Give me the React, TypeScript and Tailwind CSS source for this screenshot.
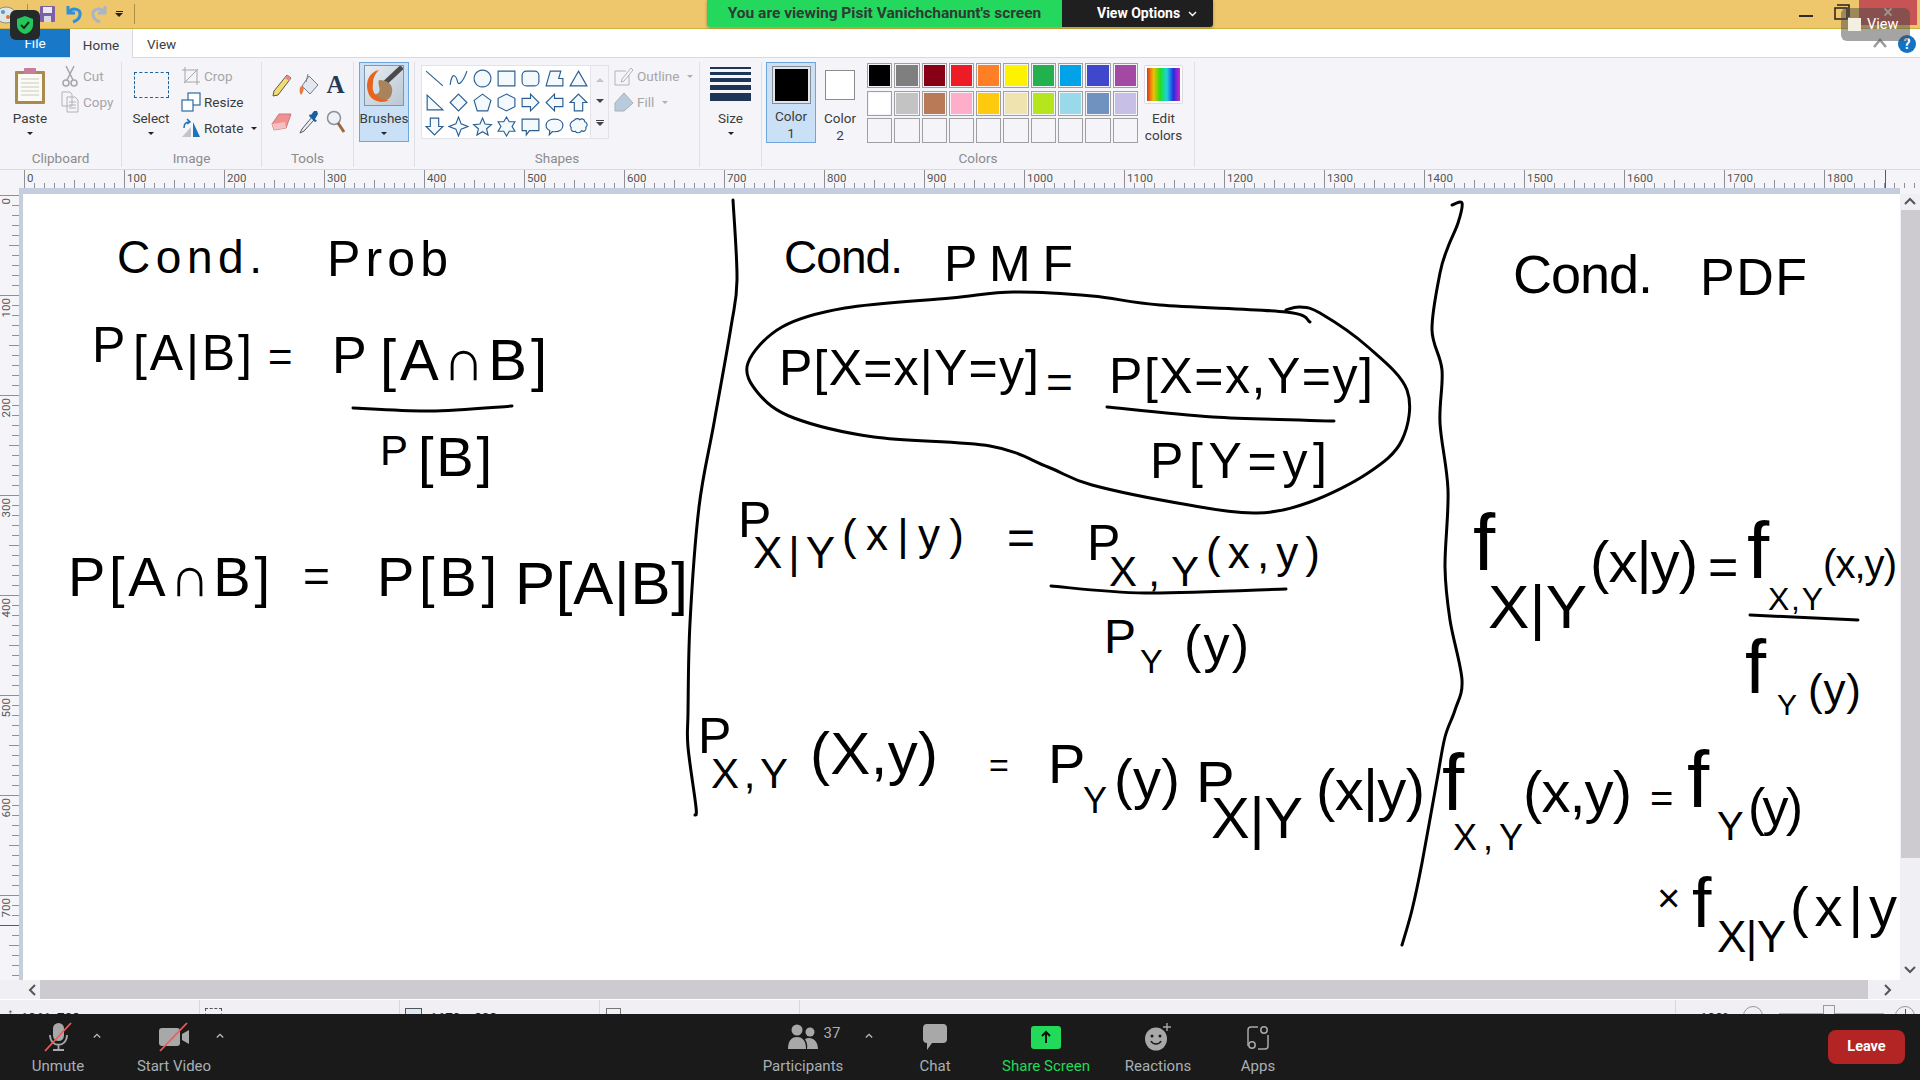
import type { ReactNode } from "react";

const rulerMarks = Array.from({ length: 190 }, (_, i) => i * 10);
const sideMarks = Array.from({ length: 80 }, (_, i) => i * 10);

const row1 = ["#000000", "#7f7f7f", "#880015", "#ed1c24", "#ff7f27", "#fff200", "#22b14c", "#00a2e8", "#3f48cc", "#a349a4"];
const row2 = ["#ffffff", "#c3c3c3", "#b97a57", "#ffaec9", "#ffc90e", "#efe4b0", "#b5e61d", "#99d9ea", "#7092be", "#c8bfe7"];

const shapes = [
  "M2 3L18 17",
  "M2 16C4 2 8 8 9 13S15 12 18 3",
  "M10 2a8 8 0 1 0 .01 0Z",
  "M2 3H18V17H2Z",
  "M6 3H14a4 4 0 0 1 4 4V13a4 4 0 0 1-4 4H6a4 4 0 0 1-4-4V7a4 4 0 0 1 4-4Z",
  "M6 3H16L14 10H18V17H2Z",
  "M10 3L18 17H2Z",
  "M3 3L18 17H3Z",
  "M10 2L18 10L10 18L2 10Z",
  "M10 2L18 8L15 18H5L2 8Z",
  "M10 2L18 6V14L10 18L2 14V6Z",
  "M2 6H10V2L18 10L10 18V14H2Z",
  "M18 6H10V2L2 10L10 18V14H18Z",
  "M10 2L18 10H14V18H6V10H2Z",
  "M10 18L18 10H14V2H6V10H2Z",
  "M10 1L12.5 7.5L19 10L12.5 12.5L10 19L7.5 12.5L1 10L7.5 7.5Z",
  "M10 2L12.4 7.6L18.5 8.2L13.9 12.2L15.3 18.2L10 15L4.7 18.2L6.1 12.2L1.5 8.2L7.6 7.6Z",
  "M10 1L12.6 5.5H18L15.3 10L18 14.5H12.6L10 19L7.4 14.5H2L4.7 10L2 5.5H7.4Z",
  "M2 3H18V14H9L6 18V14H2Z",
  "M10 3C15 3 18 5.5 18 9S15 15 10 15C9 15 8.500 15 8 14.800L5 18L5.500 13.800C3.300 12.800 2 11 2 9C2 5.500 5 3 10 3Z",
  "M6 4C7 2 10 2 11 3.500C13 2 16 3 16 5.500C18.500 6 19 9.500 17 11C18 13.500 15 15.500 13 14C11.500 16.500 8 16.500 7 14.500C4.500 15.500 2 13.500 3 11C1 9.500 2 5.500 6 4Z",
];

// handwriting on the paint canvas: text, left, right, baseline, size
const ink: [string, number, number, number, number][] = [
  ["Cond.", 117, 262, 273, 46],
  ["Prob", 327, 448, 276, 50],
  ["P", 92, 113, 362, 50],
  ["[A|B]", 133, 252, 370, 50],
  ["=", 268, 292, 371, 42],
  ["P", 332, 364, 373, 52],
  ["[A∩B]", 380, 547, 380, 58],
  ["P", 380, 406, 465, 42],
  ["[B]", 418, 492, 476, 56],
  ["P[A∩B]", 68, 270, 596, 56],
  ["=", 303, 331, 592, 46],
  ["P[B]", 377, 497, 596, 56],
  ["P[A|B]", 515, 688, 604, 60],
  ["Cond.", 784, 903, 273, 46],
  ["PMF", 944, 1073, 281, 50],
  ["P[X=x|Y=y]", 779, 1039, 385, 50],
  ["=", 1046, 1073, 398, 46],
  ["P[X=x,Y=y]", 1109, 1373, 393, 50],
  ["P[Y=y]", 1150, 1327, 478, 50],
  ["P", 738, 772, 537, 50],
  ["X|Y", 753, 835, 568, 44],
  ["(x|y)", 842, 964, 550, 44],
  ["=", 1007, 1036, 554, 48],
  ["P", 1087, 1121, 560, 50],
  ["X,Y", 1109, 1199, 586, 42],
  ["(x,y)", 1206, 1320, 568, 44],
  ["P", 1104, 1138, 653, 48],
  ["Y", 1140, 1165, 673, 34],
  ["(y)", 1184, 1249, 662, 52],
  ["P", 698, 730, 753, 50],
  ["X,Y", 711, 788, 788, 42],
  ["(X,y)", 810, 938, 774, 60],
  ["=", 989, 1009, 777, 34],
  ["P", 1048, 1089, 783, 56],
  ["Y", 1083, 1106, 813, 36],
  ["(y)", 1114, 1180, 798, 56],
  ["P", 1196, 1232, 802, 58],
  ["X|Y", 1211, 1303, 838, 58],
  ["(x|y)", 1316, 1425, 810, 58],
  ["Cond.", 1513, 1653, 293, 54],
  ["PDF", 1700, 1807, 295, 52],
  ["f", 1473, 1522, 570, 80],
  ["X|Y", 1488, 1587, 628, 62],
  ["(x|y)", 1590, 1698, 582, 58],
  ["=", 1708, 1740, 585, 52],
  ["f", 1747, 1783, 578, 80],
  ["X,Y", 1768, 1823, 610, 32],
  ["(x,y)", 1823, 1897, 578, 40],
  ["f", 1745, 1787, 693, 76],
  ["Y", 1777, 1800, 715, 30],
  ["(y)", 1808, 1861, 705, 44],
  ["f", 1442, 1480, 810, 80],
  ["X,Y", 1453, 1523, 850, 36],
  ["(x,y)", 1523, 1632, 812, 58],
  ["=", 1650, 1673, 812, 40],
  ["f", 1687, 1725, 807, 80],
  ["Y", 1717, 1747, 840, 40],
  ["(y)", 1748, 1803, 825, 52],
  ["×", 1657, 1683, 912, 40],
  ["f", 1692, 1730, 927, 70],
  ["X|Y", 1717, 1786, 952, 44],
  ["(x|y", 1790, 1897, 926, 56],
];

// pen strokes that are not letters: the column dividers, the loop, fraction bars
const inkStrokes: [number, number][][] = [
  [[733, 200], [737, 280], [731, 327], [714, 423], [699, 507], [690, 623], [688, 713], [688, 747], [696, 807], [695, 815]],
  [[1452, 205], [1462, 203], [1458, 223], [1448, 247], [1440, 273], [1432, 330], [1442, 370], [1440, 423], [1448, 490], [1445, 567], [1450, 620], [1462, 680], [1455, 710], [1445, 737], [1437, 780], [1422, 863], [1412, 910], [1402, 945]],
  [[1310, 322], [1286, 312], [1160, 305], [1092, 296], [1014, 292], [951, 298], [845, 308], [782, 327], [748, 363], [758, 393], [794, 418], [874, 437], [990, 446], [1048, 467], [1092, 485], [1189, 505], [1257, 513], [1310, 502], [1368, 473], [1402, 440], [1407, 390], [1368, 347], [1320, 313], [1300, 307], [1286, 310]],
  [[353, 408], [430, 411], [512, 406]],
  [[1107, 407], [1213, 417], [1334, 421]],
  [[1051, 586], [1145, 593], [1286, 589]],
  [[1750, 615], [1858, 620]],
];

const smooth = (p: [number, number][]) => {
  let d = `M${p[0][0]} ${p[0][1]}`;
  for (let i = 0; i < p.length - 1; i++) {
    const a = p[Math.max(i - 1, 0)];
    const b = p[i];
    const c = p[i + 1];
    const e = p[Math.min(i + 2, p.length - 1)];
    d += `C${b[0] + (c[0] - a[0]) / 6} ${b[1] + (c[1] - a[1]) / 6} ${c[0] - (e[0] - b[0]) / 6} ${c[1] - (e[1] - b[1]) / 6} ${c[0]} ${c[1]}`;
  }
  return d;
};

function Group({ w, label, children }: { w: string; label?: string; children: ReactNode }) {
  return (
    <div className={`${w} h-[105px] flex flex-col border-r border-[#dfdfe5] shrink-0`}>
      <div className="h-[87px] flex">{children}</div>
      <div className="h-[18px] text-center text-[13.5px] leading-[18px] text-[#8c8c8c]">{label}</div>
    </div>
  );
}

function Large({ w, icon, lines, arrow }: { w: string; icon: ReactNode; lines: string[]; arrow?: boolean }) {
  return (
    <div className={`${w} flex flex-col items-center shrink-0`}>
      <div className="h-[48px] flex items-center justify-center">{icon}</div>
      {lines.map((l) => (
        <div key={l} className="h-[17px] text-[13.5px] leading-[17px] text-[#3c3c3c]">{l}</div>
      ))}
      {arrow && <div className="mt-[5px] w-0 h-0 border-x-[3px] border-t-[3px] border-x-transparent border-t-[#222]" />}
    </div>
  );
}

function Small({ icon, text, muted, arrow }: { icon: ReactNode; text: string; muted?: boolean; arrow?: boolean }) {
  return (
    <div className="h-[26px] flex items-center gap-[3px]">
      <div className="w-[20px] h-[20px] flex items-center justify-center">{icon}</div>
      <span className={`text-[13.5px] ${muted ? "text-[#a6a6a6]" : "text-[#3c3c3c]"}`}>{text}</span>
      {arrow && <div className={`ml-[5px] w-0 h-0 border-x-[3px] border-t-[3px] border-x-transparent ${muted ? "border-t-[#b0b0b0]" : "border-t-[#222]"}`} />}
    </div>
  );
}

function ZoomItem({ w, icon, label, green }: { w: string; icon: ReactNode; label: string; green?: boolean }) {
  return (
    <div className={`${w} shrink-0 flex flex-col items-center pt-[9px]`}>
      <div className="h-[28px] flex items-center justify-center">{icon}</div>
      <div className={`mt-[6px] text-[15px] leading-[18px] whitespace-nowrap ${green ? "text-[#23d959]" : "text-[#a9b0b5]"}`}>{label}</div>
    </div>
  );
}

function Caret({ className }: { className: string }) {
  return (
    <svg width="10" height="7" viewBox="0 0 10 7" className={className}>
      <path d="M1 6L5 2L9 6" fill="none" stroke="#bdbdbd" strokeWidth="1.600" />
    </svg>
  );
}

export default function App() {
  return (
    <div className="relative w-[1920px] h-[1080px] overflow-hidden flex flex-col bg-white font-['Roboto',sans-serif]">
      {/* title bar */}
      <div className="h-[29px] shrink-0 flex items-center bg-[#eec66b] border-b border-[#cdb33c]">
        <svg width="16" height="22" viewBox="0 0 16 22" className="ml-0 mt-[2px]">
          <ellipse cx="6" cy="11" rx="10" ry="8" fill="#dfe4e4" stroke="#8a8f80" />
          <circle cx="3" cy="8" r="2" fill="#4a9bd0" />
          <circle cx="8" cy="13" r="2" fill="#d07a3a" />
        </svg>
        <div className="ml-[11px] w-px h-[20px] bg-[#a99146]" />
        <svg width="17" height="18" viewBox="0 0 17 18" className="ml-[11px]">
          <rect x="1" y="1" width="15" height="16" rx="1" fill="#7d5fa8" />
          <rect x="4" y="2" width="9" height="6" fill="#e9e9f2" />
          <rect x="5" y="11" width="7" height="6" fill="#d8d8e6" />
        </svg>
        <svg width="18" height="20" viewBox="0 0 18 20" className="ml-[9px]">
          <path d="M3 2V9H10M4 8C8 3 16 5 15 11C14.500 15 11 17 8 18" fill="none" stroke="#2f8fd8" strokeWidth="3" />
        </svg>
        <svg width="18" height="20" viewBox="0 0 18 20" className="ml-[7px]">
          <path d="M15 2V9H8M14 8C10 3 2 5 3 11C3.500 15 7 17 10 18" fill="none" stroke="#a9b4c6" strokeWidth="3" />
        </svg>
        <div className="ml-[7px] flex flex-col items-center gap-[1px]">
          <div className="w-[7px] h-px bg-[#222]" />
          <div className="w-0 h-0 border-x-[4px] border-t-[4px] border-x-transparent border-t-[#222]" />
        </div>
        <div className="ml-[11px] w-px h-[20px] bg-[#a99146]" />
        <div className="ml-auto mr-[21px] w-[14px] h-[2px] bg-[#2c2c2c] mt-[4px]" />
        <svg width="16" height="16" viewBox="0 0 16 16" className="mr-[9px] -mt-[5px]">
          <path d="M3 1H15V13M1 4H13V15H1Z" fill="none" stroke="#2c1d1d" strokeWidth="1.500" />
        </svg>
        <div className="w-[58px] h-[25px] mr-[3px] -mt-[3px] bg-[#c75454] flex items-start justify-center text-[#f3e4d5] text-[18px] leading-[24px]">×</div>
      </div>

      {/* tabs */}
      <div className="h-[29px] shrink-0 flex items-stretch bg-white border-b border-[#d9d9de] relative">
        <div className="w-[70px] bg-[#1a78c8] text-white text-[13.5px] flex items-center justify-center">File</div>
        <div className="w-[63px] h-[29px] pt-[3px] bg-[#f4f4f9] border-r border-[#d9d9de] text-[13.5px] text-[#3c3c3c] flex items-center justify-center">Home</div>
        <div className="ml-[14px] pt-[3px] text-[13.5px] text-[#3c3c3c] flex items-center">View</div>
        <svg width="14" height="10" viewBox="0 0 14 10" className="ml-auto mr-[33px] mt-[9px]">
          <path d="M1 9L7 2L13 9" fill="none" stroke="#9a9a9a" strokeWidth="2.500" />
        </svg>
        <div className="absolute right-[4px] top-[6px] w-[18px] h-[18px] rounded-full bg-[#1272c4] text-white font-bold text-[14px] leading-[18px] text-center">?</div>
      </div>

      {/* ribbon */}
      <div className="h-[112px] shrink-0 flex bg-[#f4f4f9] border-b border-[#d9d9de] pt-[4px]">
        <Group w="w-[122px]" label="Clipboard">
          <Large
            w="w-[60px]"
            arrow
            lines={["Paste"]}
            icon={
              <svg width="32" height="38" viewBox="0 0 32 38">
                <rect x="1" y="4" width="30" height="33" rx="1" fill="#a98a4f" />
                <rect x="4" y="7" width="24" height="27" fill="#fbfbf5" />
                <path d="M7 12H25M7 16H25M7 20H25M7 24H25M7 28H25" stroke="#c9c9c0" />
                <rect x="10" y="1" width="12" height="6" rx="1" fill="#c67f9a" />
              </svg>
            }
          />
          <div className="pt-[1px]">
            <Small
              muted
              text="Cut"
              icon={
                <svg width="16" height="22" viewBox="0 0 16 22">
                  <path d="M4 1L11 15M12 1L5 15" stroke="#a6a6a6" strokeWidth="1.500" />
                  <circle cx="4" cy="18" r="3" fill="none" stroke="#a6a6a6" strokeWidth="1.500" />
                  <circle cx="12" cy="18" r="3" fill="none" stroke="#a6a6a6" strokeWidth="1.500" />
                </svg>
              }
            />
            <Small
              muted
              text="Copy"
              icon={
                <svg width="18" height="22" viewBox="0 0 18 22">
                  <path d="M1 1H9L11 3V15H1ZM6 6H14L17 9V21H6Z" fill="#f4f4f9" stroke="#b4b4b4" />
                  <path d="M8 11H15M8 14H15M8 17H15" stroke="#b4b4b4" />
                </svg>
              }
            />
          </div>
        </Group>

        <Group w="w-[140px]" label="Image">
          <Large
            w="w-[58px]"
            arrow
            lines={["Select"]}
            icon={<div className="w-[35px] h-[26px] border border-dashed border-[#1f5f95] -mt-[2px]" />}
          />
          <div className="pt-[1px] pl-[1px]">
            <Small
              muted
              text="Crop"
              icon={
                <svg width="20" height="20" viewBox="0 0 20 20">
                  <path d="M4 1V16H19M1 4H16V19M3 17L17 3" fill="none" stroke="#a6a6a6" />
                </svg>
              }
            />
            <Small
              text="Resize"
              icon={
                <svg width="20" height="20" viewBox="0 0 20 20">
                  <rect x="7" y="1" width="12" height="12" fill="#fff" stroke="#2a6aa5" strokeWidth="1.200" />
                  <rect x="1" y="8" width="11" height="11" fill="#fff" stroke="#2a6aa5" strokeWidth="1.200" />
                </svg>
              }
            />
            <Small
              text="Rotate"
              arrow
              icon={
                <svg width="20" height="20" viewBox="0 0 20 20">
                  <path d="M1 19L10 9V19Z" fill="#c4c4c4" />
                  <path d="M12 4L19 19H12Z" fill="#1c74bd" />
                  <path d="M3 10C3 6 5 4 8 4M6 1L9 4L6 6" fill="none" stroke="#1c74bd" strokeWidth="1.500" />
                </svg>
              }
            />
          </div>
        </Group>

        <Group w="w-[92px]" label="Tools">
          <div className="ml-[6px] mt-[4px] grid grid-cols-3 grid-rows-2 w-[81px] h-[74px] place-items-center">
            <svg width="20" height="24" viewBox="0 0 20 24">
              <path d="M15 2L19 5L6 22L1 23L2 18Z" fill="#f2dc74" stroke="#5a5a4a" />
              <path d="M15 2L19 5L17 8L13 5Z" fill="#e58a8a" />
            </svg>
            <svg width="22" height="24" viewBox="0 0 22 24">
              <path d="M11 3L20 12L12 21L4 13Z" fill="#e4e8ee" stroke="#6c7f92" />
              <path d="M4 13C1 13 1 20 3 22C5 20 6 16 6 14Z" fill="#ec7a3c" />
              <path d="M8 9L10 1" stroke="#6c7f92" />
            </svg>
            <span className="font-['Liberation_Serif',serif] font-bold text-[25px] leading-none text-[#253a57]">A</span>
            <svg width="22" height="20" viewBox="0 0 22 20">
              <path d="M8 2H20L15 16L3 18L1 12Z" fill="#f09090" stroke="#c77a7a" />
              <path d="M3 18L1 12L14 10L15 16Z" fill="#f7c0c0" />
            </svg>
            <svg width="20" height="24" viewBox="0 0 20 24">
              <path d="M13 7L3 19L1 23L5 21L15 10" fill="#e4eef6" stroke="#5a5a5a" />
              <path d="M12 5L15 1H18L19 4L16 9L18 11L16 12L10 6L11 4Z" fill="#1a5fa2" />
            </svg>
            <svg width="20" height="24" viewBox="0 0 20 24">
              <circle cx="8" cy="8" r="6.500" fill="#eef2f6" stroke="#8c9199" strokeWidth="1.500" />
              <path d="M12 13L18 22" stroke="#9c6a3c" strokeWidth="3" />
            </svg>
          </div>
        </Group>

        <Group w="w-[61px]">
          <div className="ml-[5px] w-[50px] h-[80px] bg-[#c9e0f7] border border-[#6ea6dc] flex flex-col items-center">
            <div className="mt-[2px] w-[40px] h-[41px] bg-gradient-to-br from-[#e9eef3] to-[#b9c6d2] border border-[#7f97ac] overflow-hidden">
              <svg width="38" height="39" viewBox="0 0 38 39">
                <path d="M37 1L20 17" stroke="#4a4a4a" strokeWidth="5" />
                <path d="M14 14C24 14 30 20 26 30C20 40 8 32 5 24C6 28 12 30 14 26C16 22 12 18 14 14Z" fill="#a8835c" />
                <path d="M14 4C4 6 0 16 3 26C6 36 18 38 24 34C14 34 6 28 8 18C8 12 10 8 14 4Z" fill="#e8631f" />
              </svg>
            </div>
            <div className="mt-[4px] h-[17px] text-[13.5px] leading-[17px] text-[#3c3c3c]">Brushes</div>
            <div className="mt-[5px] w-0 h-0 border-x-[3px] border-t-[3px] border-x-transparent border-t-[#222]" />
          </div>
        </Group>

        <Group w="w-[285px]" label="Shapes">
          <div className="ml-[6px] mt-[3px] w-[170px] h-[74px] bg-white border border-[#e2e2e8] grid grid-cols-7 grid-rows-3 place-items-center">
            {shapes.map((d) => (
              <svg key={d} width="21" height="21" viewBox="0 0 20 20">
                <path d={d} fill="#f4f9fd" stroke="#2b5f92" strokeWidth="1.100" />
              </svg>
            ))}
          </div>
          <div className="mt-[3px] w-[18px] h-[74px] border border-l-0 border-[#e2e2e8] flex flex-col items-center justify-around py-[4px]">
            <div className="w-0 h-0 border-x-[4px] border-b-[4px] border-x-transparent border-b-[#c4c4c4]" />
            <div className="w-0 h-0 border-x-[4px] border-t-[4px] border-x-transparent border-t-[#444]" />
            <div className="flex flex-col items-center gap-[1px]">
              <div className="w-[8px] h-px bg-[#444]" />
              <div className="w-0 h-0 border-x-[4px] border-t-[4px] border-x-transparent border-t-[#444]" />
            </div>
          </div>
          <div className="pl-[5px] pt-[1px]">
            <Small
              muted
              arrow
              text="Outline"
              icon={
                <svg width="20" height="20" viewBox="0 0 20 20">
                  <path d="M1 5H12M1 5V19H15V9" fill="none" stroke="#b4b4b4" />
                  <path d="M8 13L17 2L19 4L10 15L7 16Z" fill="#f4f4f9" stroke="#b4b4b4" />
                </svg>
              }
            />
            <Small
              muted
              arrow
              text="Fill"
              icon={
                <svg width="20" height="20" viewBox="0 0 20 20">
                  <path d="M10 1L19 11L10 19H1V11Z" fill="#b8cbdc" stroke="#a8b0b8" />
                </svg>
              }
            />
          </div>
        </Group>

        <Group w="w-[62px]">
          <Large
            w="w-[61px]"
            arrow
            lines={["Size"]}
            icon={
              <div className="flex flex-col w-[41px] gap-[3px] -mt-[5px]">
                <div className="h-[2px] bg-[#1f3556]" />
                <div className="h-[3px] bg-[#1f3556]" />
                <div className="h-[4px] bg-[#1f3556]" />
                <div className="h-[5px] bg-[#1f3556]" />
                <div className="h-[8px] bg-[#1f3556]" />
              </div>
            }
          />
        </Group>

        <Group w="w-[433px]" label="Colors">
          <div className="ml-[4px] w-[50px] h-[81px] bg-[#c9e0f7] border border-[#6ea6dc] flex flex-col items-center">
            <div className="mt-[3px] w-[39px] h-[39px] border border-[#8c8c8c] p-[2px] bg-[#dbe6f2]">
              <div className="w-full h-full bg-black" />
            </div>
            <div className="mt-[4px] h-[17px] text-[13.5px] leading-[17px] text-[#3c3c3c]">Color</div>
            <div className="h-[17px] text-[13.5px] leading-[17px] text-[#3c3c3c]">1</div>
          </div>
          <div className="ml-[4px] w-[40px] flex flex-col items-center">
            <div className="mt-[8px] mb-[10px] w-[30px] h-[30px] bg-white border border-[#8c8c8c]" />
            <div className="h-[17px] text-[13.5px] leading-[17px] text-[#3c3c3c]">Color</div>
            <div className="h-[17px] text-[13.5px] leading-[17px] text-[#3c3c3c]">2</div>
          </div>
          <div className="ml-[7px] mt-[1px] grid grid-cols-10 gap-[2px] w-[271px] h-[81px]">
            {row1.concat(row2).map((c) => (
              <div key={c} className="h-[25px] border border-[#a0a0a0] p-px">
                <div className="w-full h-full" style={{ backgroundColor: c }} />
              </div>
            ))}
            {row1.map((c) => (
              <div key={c} className="h-[25px] border border-[#a0a0a0]" />
            ))}
          </div>
          <div className="ml-[7px] w-[37px] flex flex-col items-center">
            <div className="mt-[4px] w-[37px] h-[37px] border-2 border-white shadow-[0_0_1px_#666] bg-[linear-gradient(to_right,#e03020,#f0c000,#20e020,#20d0e0,#2030e0,#e020c0)]" />
            <div className="mt-[7px] h-[17px] text-[13.5px] leading-[17px] text-[#3c3c3c]">Edit</div>
            <div className="h-[17px] text-[13.5px] leading-[17px] text-[#3c3c3c]">colors</div>
          </div>
        </Group>
        <div className="flex-1" />
      </div>

      {/* horizontal ruler */}
      <svg width="1920" height="18" viewBox="0 0 1920 18" className="shrink-0 bg-[#f4f4f9]">
        {rulerMarks.map((m) => (
          <path key={m} d={`M${24.5 + m} ${m % 100 === 0 ? 0 : m % 50 === 0 ? 10 : 13}V18`} stroke="#8f8f96" strokeWidth="1" />
        ))}
        {rulerMarks
          .filter((m) => m % 100 === 0)
          .map((m) => (
            <text key={m} x={27 + m} y="12" fontSize="11.500" fill="#555" fontFamily="Roboto, sans-serif">
              {m}
            </text>
          ))}
        <path d="M1885.500 0V18" stroke="#e8144c" strokeWidth="1" />
      </svg>
      <div className="h-[6px] shrink-0 flex bg-[#f4f4f9]">
        <div className="w-[19px]" />
        <div className="w-[1881px] bg-[#c5cede]" />
      </div>

      {/* canvas row */}
      <div className="h-[786px] shrink-0 flex">
        <svg width="19" height="786" viewBox="0 194 19 786" className="shrink-0 bg-[#f4f4f9]">
          {sideMarks.map((m) => (
            <path key={m} d={`M${m % 100 === 0 ? 0 : m % 50 === 0 ? 9 : 12} ${195.5 + m}H19`} stroke="#8f8f96" strokeWidth="1" />
          ))}
          {sideMarks
            .filter((m) => m % 100 === 0)
            .map((m) => (
              <text key={m} x="10" y={198 + m} fontSize="11.500" fill="#555" fontFamily="Roboto, sans-serif" transform={`rotate(-90 10 ${198 + m})`} textAnchor="end">
                {m}
              </text>
            ))}
          <path d="M0 925.500H19" stroke="#e8144c" strokeWidth="1" />
        </svg>
        <div className="w-[4px] bg-[#c5cede] shrink-0" />
        <svg width="1877" height="786" viewBox="23 194 1877 786" className="shrink-0 bg-white">
          {inkStrokes.map((p) => (
            <path key={p.join()} d={smooth(p)} fill="none" stroke="#000" strokeWidth="3" strokeLinecap="round" strokeLinejoin="round" />
          ))}
          {ink.map(([t, x1, x2, y, size]) => (
            <text key={`${t}${x1}${y}`} x={x1} y={y} fontSize={size} textLength={x2 - x1} fill="#000" fontFamily="Liberation Sans, DejaVu Sans, sans-serif">
              {t}
            </text>
          ))}
        </svg>
        <div className="w-[20px] shrink-0 bg-[#f0f0f4] flex flex-col items-center">
          <svg width="20" height="16" viewBox="0 0 20 16">
            <path d="M5 10L10 5L15 10" fill="none" stroke="#555" strokeWidth="2" />
          </svg>
          <div className="w-[19px] h-[648px] bg-[#cdcbcf]" />
          <svg width="20" height="16" viewBox="0 0 20 16" className="mt-auto mb-[2px]">
            <path d="M5 5L10 10L15 5" fill="none" stroke="#555" strokeWidth="2" />
          </svg>
        </div>
      </div>

      {/* horizontal scrollbar */}
      <div className="h-[20px] shrink-0 flex bg-[#f0f0f4] border-b border-white">
        <div className="w-[24px]" />
        <div className="w-[16px] flex items-center justify-center">
          <svg width="10" height="14" viewBox="0 0 10 14">
            <path d="M8 2L3 7L8 12" fill="none" stroke="#555" strokeWidth="2" />
          </svg>
        </div>
        <div className="w-[1828px] bg-[#cdcbcf]" />
        <div className="w-[40px] flex items-center justify-center">
          <svg width="10" height="14" viewBox="0 0 10 14">
            <path d="M2 2L7 7L2 12" fill="none" stroke="#555" strokeWidth="2" />
          </svg>
        </div>
      </div>

      {/* status bar, mostly hidden behind the meeting toolbar */}
      <div className="h-[14px] shrink-0 flex overflow-hidden bg-[#f0f0f4] text-[13.5px] leading-[20px] text-[#222]">
        <div className="w-[200px] pl-[7px] border-r border-[#d8d8dc] flex gap-[7px] pt-[7px]">
          <span className="text-[#555] leading-[12px]">↕</span>
          <span>1061, 708px</span>
        </div>
        <div className="w-[200px] pl-[5px] border-r border-[#d8d8dc] pt-[8px]">
          <div className="w-[17px] h-[14px] border border-dashed border-[#555]" />
        </div>
        <div className="w-[200px] pl-[5px] border-r border-[#d8d8dc] flex gap-[8px] pt-[7px]">
          <div className="w-[17px] h-[14px] mt-px border border-[#555] bg-[#dce8f4]" />
          <span>1670 × 803px</span>
        </div>
        <div className="w-[200px] pl-[6px] border-r border-[#d8d8dc] pt-[8px]">
          <div className="w-[15px] h-[14px] border border-[#777]" />
        </div>
        <div className="w-[876px] border-r border-[#d8d8dc]" />
        <div className="flex-1 relative">
          <span className="absolute left-[24px] top-[7px]">100%</span>
          <div className="absolute left-[67px] top-[6px] w-[20px] h-[20px] rounded-full border border-[#999]" />
          <div className="absolute left-[103px] top-[13px] w-[105px] h-px bg-[#aaa]" />
          <div className="absolute left-[147px] top-[5px] w-[12px] h-[20px] border border-[#999] bg-[#f0f0f4]" />
          <div className="absolute left-[219px] top-[6px] w-[20px] h-[20px] rounded-full border border-[#999]" />
          <div className="absolute left-[229px] top-[9px] w-px h-[8px] bg-[#555]" />
        </div>
      </div>

      {/* meeting toolbar */}
      <div className="h-[66px] shrink-0 flex bg-[#1a1a1a]">
        <div className="w-[23px] shrink-0" />
        <ZoomItem
          w="w-[70px]"
          label="Unmute"
          icon={
            <svg width="30" height="30" viewBox="0 0 30 30">
              <rect x="10" y="1" width="11" height="18" rx="5.500" fill="#a8a8a8" />
              <path d="M7 13C7 26 24 26 24 13M15.500 22V28M10 28H21" fill="none" stroke="#a8a8a8" strokeWidth="1.800" />
              <path d="M2 29L28 1" stroke="#ef5b5b" strokeWidth="1.800" />
            </svg>
          }
        />
        <Caret className="w-[8px] mt-[18px] shrink-0" />
        <div className="w-[31px] shrink-0" />
        <ZoomItem
          w="w-[84px]"
          label="Start Video"
          icon={
            <svg width="32" height="30" viewBox="0 0 32 30">
              <rect x="1" y="6" width="21" height="18" rx="3" fill="#a8a8a8" />
              <path d="M24 12L31 8V22L24 18Z" fill="#a8a8a8" />
              <path d="M2 29L29 1" stroke="#ef5b5b" strokeWidth="1.800" />
            </svg>
          }
        />
        <Caret className="w-[8px] mt-[18px] shrink-0" />
        <div className="w-[534px] shrink-0" />
        <ZoomItem
          w="w-[90px]"
          label="Participants"
          icon={
            <div className="flex items-start gap-[6px] -mr-[22px]">
              <svg width="30" height="26" viewBox="0 0 30 26">
                <circle cx="9" cy="6" r="5.500" fill="#a8a8a8" />
                <circle cx="22" cy="8" r="4.500" fill="#a8a8a8" />
                <path d="M0 25C0 16 4 13 9 13C14 13 18 16 18 25Z" fill="#a8a8a8" />
                <path d="M19 25C20 20 18 17 17 15C22 12 30 15 30 25Z" fill="#a8a8a8" />
              </svg>
              <span className="text-[15px] leading-[18px] text-[#a9b0b5]">37</span>
            </div>
          }
        />
        <div className="w-[17px] shrink-0" />
        <Caret className="w-[8px] mt-[18px] shrink-0" />
        <div className="w-[32px] shrink-0" />
        <ZoomItem
          w="w-[60px]"
          label="Chat"
          icon={
            <svg width="26" height="28" viewBox="0 0 26 28">
              <path d="M5 1H21C24 1 25 3 25 5V16C25 19 23 20 21 20H10L5 27V20C2 20 1 18 1 16V5C1 3 2 1 5 1Z" fill="#a8a8a8" />
            </svg>
          }
        />
        <div className="w-[31px] shrink-0" />
        <ZoomItem
          w="w-[100px]"
          green
          label="Share Screen"
          icon={
            <div className="w-[30px] h-[23px] rounded-[3px] bg-[#23d959] flex items-center justify-center">
              <svg width="12" height="14" viewBox="0 0 12 14">
                <path d="M6 13V2M2 6L6 2L10 6" fill="none" stroke="#111" strokeWidth="2" />
              </svg>
            </div>
          }
        />
        <div className="w-[22px] shrink-0" />
        <ZoomItem
          w="w-[80px]"
          label="Reactions"
          icon={
            <svg width="28" height="28" viewBox="0 0 28 28">
              <ellipse cx="12" cy="16" rx="11" ry="11.500" fill="#a8a8a8" />
              <circle cx="8" cy="13" r="1.500" fill="#1a1a1a" />
              <circle cx="16" cy="13" r="1.500" fill="#1a1a1a" />
              <path d="M7 18C9 22 15 22 17 18" fill="none" stroke="#1a1a1a" strokeWidth="1.600" />
              <path d="M23 0V8M19 4H27" stroke="#a8a8a8" strokeWidth="1.400" />
            </svg>
          }
        />
        <div className="w-[30px] shrink-0" />
        <ZoomItem
          w="w-[60px]"
          label="Apps"
          icon={
            <svg width="22" height="26" viewBox="0 0 22 26">
              <path d="M1 22V6C1 4 2 3 4 3H11M21 11V22C21 24 20 25 18 25H11" fill="none" stroke="#a8a8a8" strokeWidth="1.500" />
              <circle cx="17" cy="6" r="3.200" fill="none" stroke="#a8a8a8" strokeWidth="1.500" />
              <circle cx="5" cy="21" r="3.200" fill="#1a1a1a" stroke="#a8a8a8" strokeWidth="1.500" />
            </svg>
          }
        />
        <div className="w-[540px] shrink-0" />
        <div className="mt-[16px] w-[77px] h-[34px] rounded-[8px] bg-[#b32424] text-white font-bold text-[14.5px] flex items-center justify-center">Leave</div>
      </div>

      {/* screen share overlays */}
      <div className="absolute left-[707px] top-0 w-[506px] h-[27px] flex rounded-b-[3px] overflow-hidden shadow-[0_1px_3px_rgba(0,0,0,0.3)]">
        <div className="w-[355px] bg-[#24d85e] text-[#2d3b33] font-bold text-[15.5px] flex items-center justify-center">You are viewing Pisit Vanichchanunt's screen</div>
        <div className="flex-1 bg-[#1f1f1f] text-white font-bold text-[14px] flex items-center pl-[35px] gap-[8px]">
          View Options
          <svg width="9" height="6" viewBox="0 0 9 6">
            <path d="M1 1L4.500 4.500L8 1" fill="none" stroke="#fff" strokeWidth="1.400" />
          </svg>
        </div>
      </div>
      <div className="absolute left-[10px] top-[10px] w-[30px] h-[30px] rounded-[6px] bg-[#26292a] flex items-center justify-center">
        <svg width="16" height="18" viewBox="0 0 16 18">
          <path d="M8 0L16 3V9C16 14 12 17 8 18C4 17 0 14 0 9V3Z" fill="#23c75a" />
          <path d="M4 9L7 12L12 6" fill="none" stroke="#1c2a22" strokeWidth="2" />
        </svg>
      </div>
      <div className="absolute left-[1841px] top-[8px] w-[69px] h-[33px] rounded-[6px] bg-[#4a4a4a]/50 flex items-center pl-[7px] gap-[6px] text-white text-[14.5px]">
        <div className="w-[13px] h-[13px] bg-[#f3efe2]" />
        View
      </div>
    </div>
  );
}
